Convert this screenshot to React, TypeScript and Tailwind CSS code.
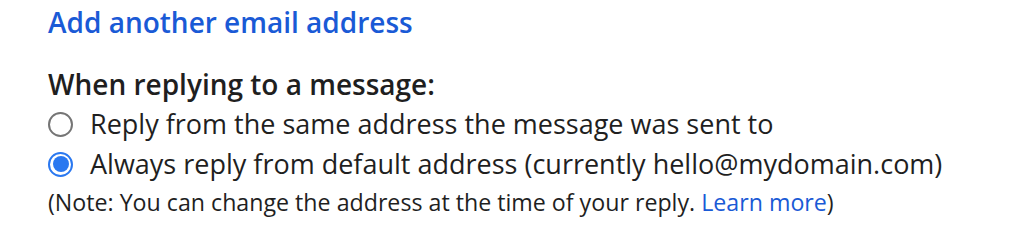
const Radio = ({ checked }: { checked?: boolean }) => (
  <span
    className={
      checked
        ? "flex h-[25px] w-[25px] shrink-0 items-center justify-center rounded-full border-[2px] border-[#2a78f0]"
        : "flex h-[25px] w-[25px] shrink-0 items-center justify-center rounded-full border-[2px] border-[#757575]"
    }
  >
    {checked && <span className="h-[16px] w-[16px] rounded-full bg-[#2a78f0]" />}
  </span>
);

export default function App() {
  return (
    <div
      className="flex flex-col bg-white pl-[48px] pt-[2px] text-[#1f1f1f]"
      style={{ fontFamily: "'Open Sans', sans-serif" }}
    >
      <a className="text-[28px] font-semibold leading-[40px] text-[#1a5ad6] cursor-pointer">Add another email address</a>

      <h2 className="mt-[22px] text-[28px] font-semibold leading-[40px]">When replying to a message:</h2>

      <div className="flex flex-col">
        <label className="flex items-center gap-[17px] text-[27px] leading-[40px]">
          <Radio />
          Reply from the same address the message was sent to
        </label>
        <label className="flex items-center gap-[17px] text-[27px] leading-[40px]">
          <Radio checked />
          Always reply from default address (currently hello@mydomain.com)
        </label>
      </div>

      <p className="mt-[1px] text-[23.2px] leading-[34px]">
        (Note: You can change the address at the time of your reply.{" "}
        <a className="text-[#1a5ad6] cursor-pointer">Learn more</a>)
      </p>
    </div>
  );
}
